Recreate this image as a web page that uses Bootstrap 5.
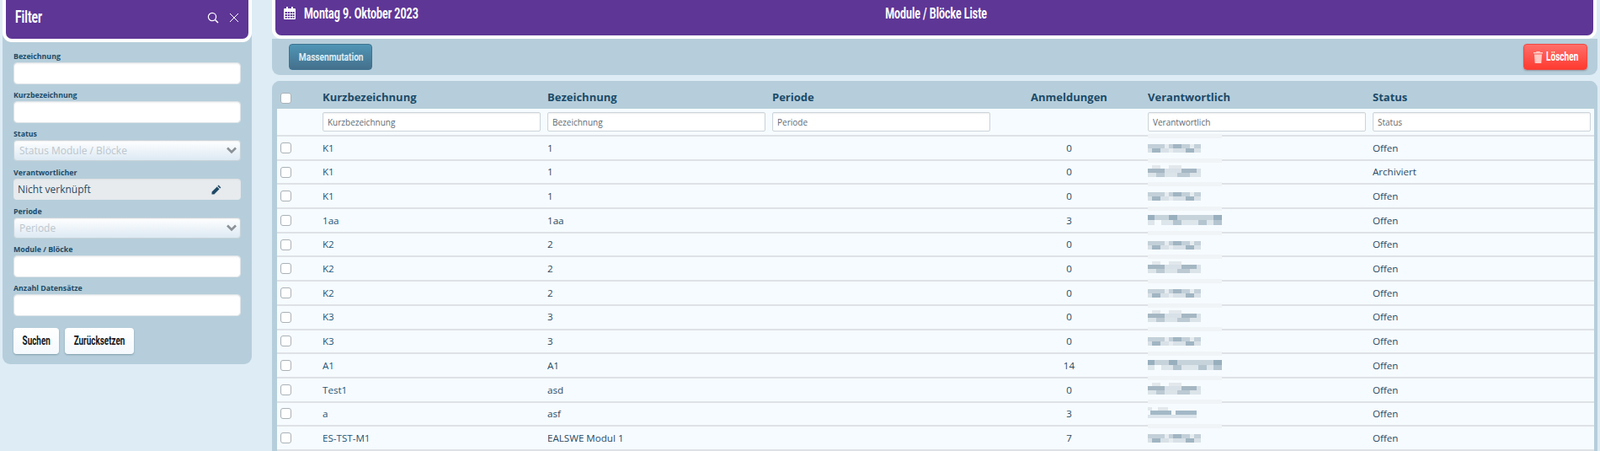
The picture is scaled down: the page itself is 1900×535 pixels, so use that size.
<!DOCTYPE html>
<html lang="de">
<head>
<meta charset="utf-8">
<title>Module / Blöcke Liste</title>
<link href="https://cdn.jsdelivr.net/npm/bootstrap@5.3.0/dist/css/bootstrap.min.css" rel="stylesheet">
<style>
html,body{height:535px;overflow:hidden}
body{background:#deecf5;font-family:"Open Sans",sans-serif;font-size:12px;color:#2b4a5e}
.narrow{font-family:"Roboto",sans-serif;font-weight:700;white-space:nowrap}
.squeeze{display:inline-block;transform:scaleX(.69);transform-origin:center}
.squeeze-left{transform-origin:left center}
.page-wrap{height:535px;padding:0 3px;gap:24px;overflow:hidden}
.side{width:296px;flex:none;height:432px;background:#b6cedb;border-radius:0 0 9px 9px}
.main-col{min-width:0;height:535px}
.band{background:#5e3696;color:#fff;border-radius:0 0 7px 7px;box-shadow:0 0 0 4px #fff;clip-path:inset(0 -4px -4px -4px)}
.side-head{height:46px;margin:0 4px;padding:0 11px 6px 11px;font-size:20px}
.side-icons{gap:12px;margin-top:2px}
.top-head{height:42px;margin:0 5px 4px 4px;padding:0 16px 12px 10px;font-size:18px}
.date-box{width:200px;margin-left:10px}
.top-title{flex:1;text-align:center;padding-right:214px}
.filter-body{padding:15px 13px 0 13px}
.lbl{display:block;font-size:8.8px;line-height:13px;font-weight:700;color:#1d4a66;margin:0}
.fld{margin-bottom:7px}
.fld-short{margin-bottom:8px}
.fld .form-control,.fld .form-select{height:26px;min-height:0;padding:0 6px;font-size:12px;border:1px solid #dfe4e8;border-radius:4px;box-shadow:inset 0 1px 2px rgba(0,0,0,.06)}
.fld .form-select{height:25px;background-color:#eef4f9;background-image:linear-gradient(#fff,#dce9f3);background-size:100% 100%;background-position:0 0;color:#bcc6cd;padding-left:6px;border-color:#c8d2d9}
.sel-wrap{position:relative}
.sel-wrap svg{position:absolute;right:5px;top:8px}
.fld .ro-box{height:25px;background:#e7ebee;color:#2b4a5e;display:flex;align-items:center;justify-content:space-between;padding:0 23px 0 5px;border-radius:4px;font-size:12px;box-shadow:inset 0 1px 2px rgba(0,0,0,.05)}
.btn-row{gap:7px;margin-top:14px}
.btn-plain{background:linear-gradient(#fff,#f4f9fd);color:#14181c;font-size:15px;height:31px;padding:0;border:0;border-radius:4px;box-shadow:0 1px 2px rgba(30,60,80,.35);display:flex;align-items:center;justify-content:center}
.btn-plain .squeeze{transform:scaleX(.66)}
.w-search{width:54px}.w-reset{width:82px}
.tools{height:43px;background:#b6cedb;border-radius:0 0 9px 9px;padding:6px 12px 0 20px;margin-bottom:7px}
.btn-mass{background:linear-gradient(#4f95b5,#44708c);color:#dcecf5;font-size:13px;height:31px;width:99px;padding:0;border:1px solid #3f7390;border-radius:4px}
.btn-mass .squeeze{transform:scaleX(.78)}
.btn-del{background:linear-gradient(#ff6f6a,#ff3a30);color:#fff;font-size:14px;height:31px;width:76px;padding:0;border:1px solid #ee4a44;border-radius:4px;box-shadow:0 1px 2px rgba(60,30,30,.3)}
.del-text{width:38px}
.btn-del .squeeze{transform:scaleX(.72);transform-origin:left center}
.list-card{flex:1;min-height:0;background:#b6cedb;border-radius:9px 9px 0 0;padding:0 4px 0 6px;overflow:hidden}
.mod-table{table-layout:fixed;width:1564px;margin:0;border-collapse:collapse}
.mod-table th,.mod-table td{padding:0 4px;vertical-align:middle;background:#f6fbff;color:#2b4a5e;font-size:11.6px;box-shadow:none}
.mod-table thead tr:first-child th{background:#b6cedb;height:33px;font-size:13px;font-weight:700;color:#1b4a68;border:0;padding-top:7px}
.mod-table .row-filter th{height:32px;border:0;border-bottom:2px solid #dee2e6;font-weight:400}
.mod-table tbody tr td{height:28.7px;border:0;border-bottom:2px solid #dee2e6}
.mod-table .lnk{color:#1d5576}
.c-check{width:50px}.c-main{width:267px}.c-num{width:179px}
.mod-table .form-check-input{width:13px;height:13px;margin:0;border:1px solid #a9b2b8;border-radius:3px;display:block;box-shadow:none}
.mod-table .form-control{height:23px;min-height:0;width:259px;padding:0 5px;font-size:10px;border:1px solid #cdd5da;border-radius:2px;box-shadow:inset 0 1px 2px rgba(0,0,0,.07)}
.mod-table .form-control::placeholder{color:#5f6a72;opacity:1}
.mosaic{display:block;width:88px;height:27px;margin-top:-6px}
</style>
</head>
<body>
<svg width="0" height="0" class="position-absolute">
  <defs>
    <symbol id="m1" viewBox="0 0 88 27">
      <rect width="88" height="5" fill="#f0f4f7"/>
      <path fill="#c3d0d9" d="M0 12h63v5H0z"/><path fill="#d8e1e7" d="M0 17h63v5H0z"/>
      <path fill="#a1b5c2" d="M5 17h10v5H5zM30 12h10v5H30zM45 17h10v5H45z"/>
      <path fill="#e6ecf0" d="M20 12h5v5h-5zM50 12h5v5h-5zM25 17h5v5h-5z"/>
    </symbol>
    <symbol id="m2" viewBox="0 0 88 27">
      <rect width="88" height="5" fill="#f0f4f7"/>
      <path fill="#e2e8ec" d="M5 8h10v4H5zM25 8h15v4H25z"/>
      <path fill="#a5b7c3" d="M0 12h20v5H0zM40 12h18v5H40z"/><path fill="#d8e1e7" d="M20 12h20v5H20zM58 12h5v5h-5z"/>
      <path fill="#dbe4e9" d="M0 17h63v5H0z"/><path fill="#bccad3" d="M10 17h10v5H10zM35 17h15v5H35z"/>
    </symbol>
    <symbol id="m3" viewBox="0 0 88 27">
      <rect width="88" height="5" fill="#f0f4f7"/>
      <path fill="#c7d3db" d="M0 10h88v6H0z"/><path fill="#98afbe" d="M0 10h8v6H0zM25 10h10v6H25zM78 10h10v6H78z"/>
      <path fill="#dde6eb" d="M0 16h88v6H0z"/><path fill="#f6fbff" d="M8 16h8v6H8z"/><path fill="#b4c5d0" d="M30 16h10v6H30zM60 16h10v6H60zM78 16h10v6H78z"/>
    </symbol>
    <symbol id="m4" viewBox="0 0 88 27">
      <rect width="88" height="5" fill="#f0f4f7"/>
      <path fill="#e2e8ec" d="M0 9h5v4H0zM12 9h12v4H12z"/>
      <path fill="#a3b9c7" d="M3 13h25v5H3zM33 13h25v5H33z"/><path fill="#dbe5eb" d="M0 18h58v4H0z"/>
    </symbol>
  </defs>
</svg>

<div class="page-wrap d-flex">
  <aside class="side">
    <div class="band side-head d-flex align-items-center justify-content-between narrow">
      <span class="squeeze squeeze-left">Filter</span>
      <span class="d-flex align-items-center side-icons">
        <svg width="14" height="14" viewBox="0 0 14 14" fill="none" stroke="#fff" stroke-width="1.2"><circle cx="6" cy="6" r="4.6"/><path d="M9.5 9.5 13 13" stroke-width="1.5"/></svg>
        <svg width="12" height="12" viewBox="0 0 12 12" fill="none" stroke="#fff" stroke-width="1"><path d="M1 1 11 11M11 1 1 11"/></svg>
      </span>
    </div>
    <form class="filter-body">
      <div class="fld"><label class="lbl">Bezeichnung</label><input class="form-control" type="text"></div>
      <div class="fld"><label class="lbl">Kurzbezeichnung</label><input class="form-control" type="text"></div>
      <div class="fld fld-short"><label class="lbl">Status</label>
        <div class="sel-wrap"><div class="form-select d-flex align-items-center">Status Module / Blöcke</div>
          <svg width="12" height="9" viewBox="0 0 12 9" fill="none" stroke="#8b9297" stroke-width="2.6"><path d="M1 1.5 6 6.5 11 1.5"/></svg></div></div>
      <div class="fld fld-short"><label class="lbl">Verantwortlicher</label>
        <div class="ro-box"><span>Nicht verknüpft</span>
          <svg width="12" height="12" viewBox="0 0 12 12" fill="#1f4a66"><path d="M8.6 0.6 11.4 3.4 10.2 4.6 7.4 1.8zM6.7 2.5 9.5 5.3 3.4 11.4 0.4 11.6 0.6 8.6z"/></svg></div></div>
      <div class="fld"><label class="lbl">Periode</label>
        <div class="sel-wrap"><div class="form-select d-flex align-items-center">Periode</div>
          <svg width="12" height="9" viewBox="0 0 12 9" fill="none" stroke="#8b9297" stroke-width="2.6"><path d="M1 1.5 6 6.5 11 1.5"/></svg></div></div>
      <div class="fld"><label class="lbl">Module / Blöcke</label><input class="form-control" type="text"></div>
      <div class="fld m-0"><label class="lbl">Anzahl Datensätze</label><input class="form-control" type="text"></div>
      <div class="d-flex btn-row">
        <button type="button" class="btn btn-plain w-search narrow"><span class="squeeze">Suchen</span></button>
        <button type="button" class="btn btn-plain w-reset narrow"><span class="squeeze">Zurücksetzen</span></button>
      </div>
    </form>
  </aside>

  <main class="main-col flex-grow-1 d-flex flex-column">
    <div class="band top-head d-flex align-items-center narrow">
      <svg width="14" height="15" viewBox="0 0 14 15" fill="#fff"><path d="M3 0h2v2h4V0h2v2h2a1 1 0 0 1 1 1v11a1 1 0 0 1-1 1H1a1 1 0 0 1-1-1V3a1 1 0 0 1 1-1h2z"/><g fill="#5e3696"><rect x="1.5" y="6" width="2.4" height="2"/><rect x="4.7" y="6" width="2.2" height="2"/><rect x="7.7" y="6" width="2.2" height="2"/><rect x="10.6" y="6" width="2" height="2"/><rect x="1.5" y="9" width="2.4" height="2"/><rect x="4.7" y="9" width="2.2" height="2"/><rect x="7.7" y="9" width="2.2" height="2"/><rect x="10.6" y="9" width="2" height="2"/><rect x="1.5" y="12" width="2.4" height="1.6"/><rect x="4.7" y="12" width="2.2" height="1.6"/><rect x="7.7" y="12" width="2.2" height="1.6"/><rect x="10.6" y="12" width="2" height="1.6"/></g></svg>
      <span class="date-box"><span class="squeeze squeeze-left">Montag 9. Oktober 2023</span></span>
      <span class="top-title"><span class="squeeze">Module / Blöcke Liste</span></span>
    </div>
    <div class="tools d-flex justify-content-between align-items-start">
      <button type="button" class="btn btn-mass narrow"><span class="squeeze">Massenmutation</span></button>
      <button type="button" class="btn btn-del narrow d-flex align-items-center justify-content-center gap-1">
        <svg width="11" height="14" viewBox="0 0 11 14" fill="#ffc9c4"><path d="M3.5 0h4l.5 1H11v1.6H0V1h3zM1 3.6h9L9.3 14H1.7z"/></svg><span class="del-text"><span class="squeeze">Löschen</span></span></button>
    </div>
    <div class="list-card">
      <table class="table mod-table">
        <colgroup><col class="c-check"><col class="c-main"><col class="c-main"><col class="c-main"><col class="c-num"><col class="c-main"><col class="c-main"></colgroup>
        <thead>
          <tr>
            <th><input class="form-check-input" type="checkbox"></th>
            <th>Kurzbezeichnung</th><th>Bezeichnung</th><th>Periode</th><th class="text-center">Anmeldungen</th><th>Verantwortlich</th><th>Status</th>
          </tr>
          <tr class="row-filter">
            <th></th>
            <th><input class="form-control" placeholder="Kurzbezeichnung"></th>
            <th><input class="form-control" placeholder="Bezeichnung"></th>
            <th><input class="form-control" placeholder="Periode"></th>
            <th></th>
            <th><input class="form-control" placeholder="Verantwortlich"></th>
            <th><input class="form-control" placeholder="Status"></th>
          </tr>
        </thead>
        <tbody>
          <tr><td><input class="form-check-input" type="checkbox"></td><td class="lnk">K1</td><td>1</td><td></td><td class="text-center">0</td><td><svg class="mosaic"><use href="#m1"/></svg></td><td>Offen</td></tr>
          <tr><td><input class="form-check-input" type="checkbox"></td><td class="lnk">K1</td><td>1</td><td></td><td class="text-center">0</td><td><svg class="mosaic"><use href="#m2"/></svg></td><td>Archiviert</td></tr>
          <tr><td><input class="form-check-input" type="checkbox"></td><td class="lnk">K1</td><td>1</td><td></td><td class="text-center">0</td><td><svg class="mosaic"><use href="#m1"/></svg></td><td>Offen</td></tr>
          <tr><td><input class="form-check-input" type="checkbox"></td><td class="lnk">1aa</td><td>1aa</td><td></td><td class="text-center">3</td><td><svg class="mosaic"><use href="#m3"/></svg></td><td>Offen</td></tr>
          <tr><td><input class="form-check-input" type="checkbox"></td><td class="lnk">K2</td><td>2</td><td></td><td class="text-center">0</td><td><svg class="mosaic"><use href="#m1"/></svg></td><td>Offen</td></tr>
          <tr><td><input class="form-check-input" type="checkbox"></td><td class="lnk">K2</td><td>2</td><td></td><td class="text-center">0</td><td><svg class="mosaic"><use href="#m2"/></svg></td><td>Offen</td></tr>
          <tr><td><input class="form-check-input" type="checkbox"></td><td class="lnk">K2</td><td>2</td><td></td><td class="text-center">0</td><td><svg class="mosaic"><use href="#m1"/></svg></td><td>Offen</td></tr>
          <tr><td><input class="form-check-input" type="checkbox"></td><td class="lnk">K3</td><td>3</td><td></td><td class="text-center">0</td><td><svg class="mosaic"><use href="#m2"/></svg></td><td>Offen</td></tr>
          <tr><td><input class="form-check-input" type="checkbox"></td><td class="lnk">K3</td><td>3</td><td></td><td class="text-center">0</td><td><svg class="mosaic"><use href="#m1"/></svg></td><td>Offen</td></tr>
          <tr><td><input class="form-check-input" type="checkbox"></td><td class="lnk">A1</td><td>A1</td><td></td><td class="text-center">14</td><td><svg class="mosaic"><use href="#m3"/></svg></td><td>Offen</td></tr>
          <tr><td><input class="form-check-input" type="checkbox"></td><td class="lnk">Test1</td><td>asd</td><td></td><td class="text-center">0</td><td><svg class="mosaic"><use href="#m2"/></svg></td><td>Offen</td></tr>
          <tr><td><input class="form-check-input" type="checkbox"></td><td class="lnk">a</td><td>asf</td><td></td><td class="text-center">3</td><td><svg class="mosaic"><use href="#m4"/></svg></td><td>Offen</td></tr>
          <tr><td><input class="form-check-input" type="checkbox"></td><td class="lnk">ES-TST-M1</td><td>EALSWE Modul 1</td><td></td><td class="text-center">7</td><td><svg class="mosaic"><use href="#m1"/></svg></td><td>Offen</td></tr>
        </tbody>
      </table>
    </div>
  </main>
</div>
<script src="https://cdn.jsdelivr.net/npm/bootstrap@5.3.0/dist/js/bootstrap.bundle.min.js"></script>
</body>
</html>
